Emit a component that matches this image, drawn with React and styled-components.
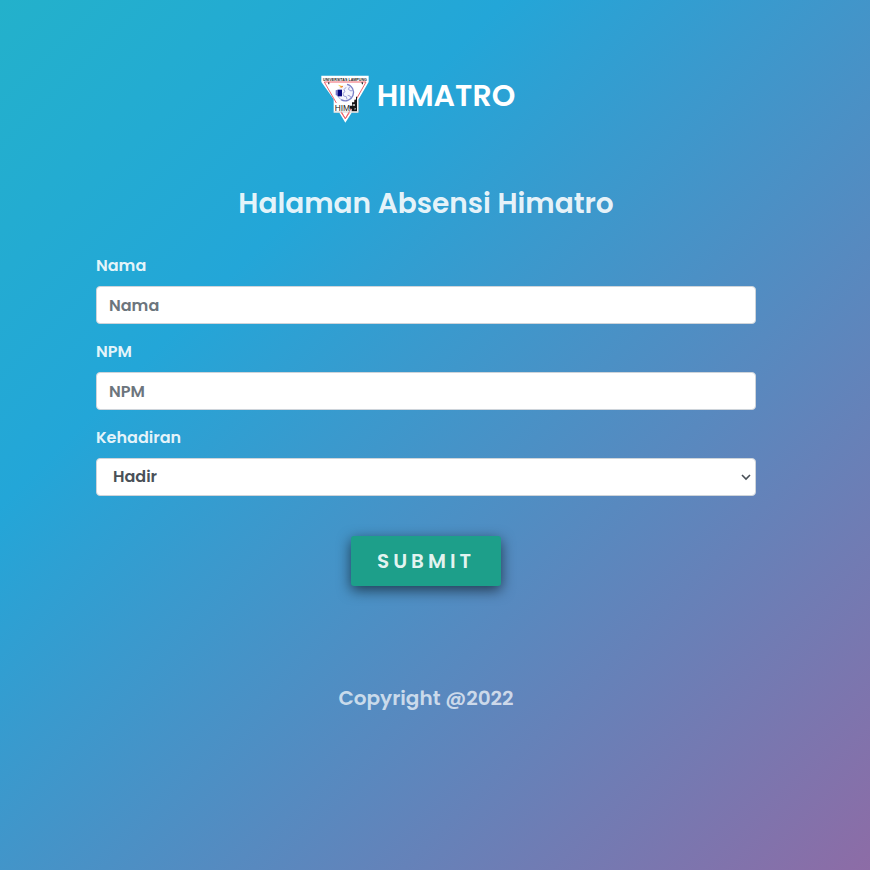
import React from "react";
import styled, { createGlobalStyle } from "styled-components";

const GlobalStyle = createGlobalStyle`
  *, *::before, *::after { box-sizing: border-box; }
  body {
    margin: 0;
    font-family: Poppins, Inter, sans-serif;
    font-size: 16px;
    font-weight: 600;
    line-height: 24px;
  }
`;

const Page = styled.div`
  min-height: 100vh;
  padding: 72px 18px 72px 0;
  background: linear-gradient(135deg, #23b1cb 0%, #23a6d8 29%, #8d6ca6 100%);
`;

const Container = styled.div`
  max-width: 720px;
  margin: 0 auto;
  padding: 0 30px;
  display: flex;
  flex-direction: column;
`;

const Brand = styled.a`
  align-self: center;
  display: flex;
  align-items: flex-start;
  gap: 8px;
  margin-right: 16px;
  padding: 3px 0;
  color: #fff;
  font-size: 30px;
  line-height: 42px;
  text-decoration: none;
`;

const Logo = styled.svg`
  width: 48px;
  height: 48px;
  flex: none;
`;

const Title = styled.h1`
  margin: 60px 0 32px;
  color: rgba(255, 255, 255, 0.9);
  font-size: 28px;
  font-weight: 600;
  line-height: 36px;
  text-align: center;
`;

const Form = styled.form`
  display: flex;
  flex-direction: column;
  gap: 16px;
`;

const Field = styled.div`
  display: flex;
  flex-direction: column;
  gap: 8px;
`;

const Label = styled.label`
  color: rgba(255, 255, 255, 0.9);
`;

const Input = styled.input`
  width: 100%;
  height: 38px;
  padding: 6px 12px;
  border: 1px solid #ced4da;
  border-radius: 4px;
  background: #fff;
  color: #495057;
  font: inherit;

  &::placeholder {
    color: #6c757d;
    opacity: 1;
  }
`;

const SelectBox = styled.div`
  display: grid;
  align-items: center;

  > * { grid-area: 1 / 1; }
`;

const Select = styled(Input).attrs({ as: "select" })`
  appearance: none;
  padding: 6px 24px 6px 16px;
`;

const Chevron = styled.svg`
  width: 10px;
  height: 8px;
  margin-right: 5px;
  justify-self: end;
  pointer-events: none;
`;

const Submit = styled.button`
  align-self: center;
  width: 150px;
  height: 50px;
  margin-top: 24px;
  padding: 0;
  border: 0;
  border-radius: 3px;
  background: #1d9f8a;
  box-shadow: 0 4px 14px rgba(0, 0, 0, 0.6);
  color: rgba(255, 255, 255, 0.9);
  font: inherit;
  font-size: 20px;
  letter-spacing: 4px;
`;

const Footer = styled.footer`
  margin-top: 97px;
  color: rgba(255, 255, 255, 0.7);
  font-size: 20px;
  line-height: 30px;
  text-align: center;
`;

function HimatroLogo() {
  return (
    <Logo viewBox="32 31 144 144" aria-hidden="true">
      <path d="M33 33H175V52L144 105V144H124L105 174L87 144H70V104L33 52Z" fill="#fff" />
      <path d="M42 52H167L105 162Z" fill="none" stroke="#f0646c" strokeWidth="3" />
      <text x="104" y="48" textAnchor="middle" fontFamily="Liberation Sans" fontWeight="700" fontSize="11" fill="#222">
        UNIVERSITAS LAMPUNG
      </text>
      <path d="M53 53h4v6h-3zM153 53h5v6h-3z" fill="#333" />
      <circle cx="106" cy="84" r="24" fill="#f4f5fd" />
      <path d="M110 59A25 25 0 1 1 92 105" fill="none" stroke="#7a80c6" strokeWidth="4" />
      <path d="M92 105A25 25 0 0 1 81 86" fill="none" stroke="#a4a8de" strokeWidth="3" />
      <path d="M107 68l-6 7 3 6-6 5 2 8 8 2 2 8M118 66l-4 8 8 5 6-3M112 92l7 2 4 7" fill="none" stroke="#9ba0d8" strokeWidth="3" />
      <path d="M83 60l15 5-5 5z" fill="#f3cf41" />
      <path d="M87 68l11-5-1 5z" fill="#ef6938" />
      <path d="M76 77l6-2v19l-6-3z" fill="#7775c8" />
      <path d="M82 75h13v20H82z" fill="#08087e" />
      <path d="M72 115H117V141H72Z" fill="#fff" />
      <text x="73" y="139" fontFamily="Liberation Sans" fontWeight="400" fontSize="25" fill="#222">HIM</text>
      <path d="M140 96V140H124V132H118V123H125V113H132V105H137V96Z" fill="#171717" />
      <path d="M127 119h7v4h-7zM133 129l4 3-4 5z" fill="#ddd" />
      <path d="M71 142H144V106" fill="none" stroke="#bbb" strokeWidth="2" />
      <path d="M93 144l12 18 12-18" fill="none" stroke="#f0646c" strokeWidth="3" />
    </Logo>
  );
}

export default function App() {
  return (
    <>
      <GlobalStyle />
      <Page>
        <Container>
          <Brand href="#">
            <HimatroLogo />
            HIMATRO
          </Brand>
          <Title>Halaman Absensi Himatro</Title>
          <Form onSubmit={(event) => event.preventDefault()}>
            <Field>
              <Label htmlFor="nama">Nama</Label>
              <Input id="nama" type="text" placeholder="Nama" />
            </Field>
            <Field>
              <Label htmlFor="npm">NPM</Label>
              <Input id="npm" type="text" placeholder="NPM" />
            </Field>
            <Field>
              <Label htmlFor="kehadiran">Kehadiran</Label>
              <SelectBox>
                <Select id="kehadiran">
                  <option>Hadir</option>
                </Select>
                <Chevron viewBox="0 0 10 8" aria-hidden="true">
                  <path d="M1 2l4 4 4-4" fill="none" stroke="#495057" strokeWidth="1.6" />
                </Chevron>
              </SelectBox>
            </Field>
            <Submit type="submit">SUBMIT</Submit>
          </Form>
          <Footer>Copyright @2022</Footer>
        </Container>
      </Page>
    </>
  );
}
